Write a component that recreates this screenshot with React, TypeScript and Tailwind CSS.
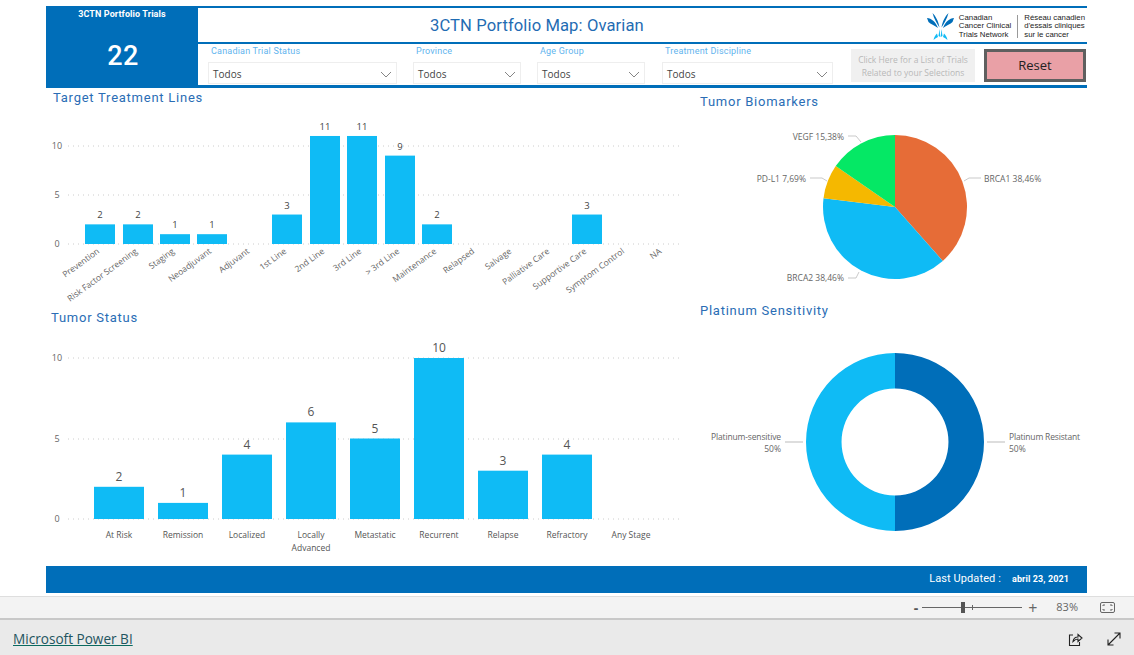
const din = "font-['Roboto',sans-serif]";
const seg = "'Open Sans', 'Noto Sans', sans-serif";

const filters = [
  { label: "Canadian Trial Status", width: "w-[189px]" },
  { label: "Province", width: "w-[108px]" },
  { label: "Age Group", width: "w-[108px]" },
  { label: "Treatment Discipline", width: "w-[171px]" },
];

const lines = [
  { name: "Prevention", x: 85, v: 2 },
  { name: "Risk Factor Screening", x: 123, v: 2 },
  { name: "Staging", x: 160, v: 1 },
  { name: "Neoadjuvant", x: 197, v: 1 },
  { name: "Adjuvant", x: 235, v: 0 },
  { name: "1st Line", x: 272, v: 3 },
  { name: "2nd Line", x: 310, v: 11 },
  { name: "3rd Line", x: 347, v: 11 },
  { name: "> 3rd Line", x: 385, v: 9 },
  { name: "Maintenance", x: 422, v: 2 },
  { name: "Relapsed", x: 460, v: 0 },
  { name: "Salvage", x: 497, v: 0 },
  { name: "Palliative Care", x: 535, v: 0 },
  { name: "Supportive Care", x: 572, v: 3 },
  { name: "Symptom Control", x: 610, v: 0 },
  { name: "NA", x: 647, v: 0 },
];

const status = [
  { name: ["At Risk"], x: 94, v: 2 },
  { name: ["Remission"], x: 158, v: 1 },
  { name: ["Localized"], x: 222, v: 4 },
  { name: ["Locally", "Advanced"], x: 286, v: 6 },
  { name: ["Metastatic"], x: 350, v: 5 },
  { name: ["Recurrent"], x: 414, v: 10 },
  { name: ["Relapse"], x: 478, v: 3 },
  { name: ["Refractory"], x: 542, v: 4 },
  { name: ["Any Stage"], x: 606, v: 0 },
];

function Chevron() {
  return (
    <svg width="12" height="7" viewBox="0 0 12 7" className="shrink-0">
      <path d="M1 1l5 5 5-5" fill="none" stroke="#777" strokeWidth="0.9" />
    </svg>
  );
}

function Filter({ label, width }: { label: string; width: string }) {
  return (
    <div className={`flex shrink-0 flex-col ${width}`}>
      <div className={`pl-[3px] pt-[1px] text-[9px] leading-[12px] tracking-[0.2px] text-[#5fb4ee] ${din}`}>{label}</div>
      <div className="mt-[5px] flex h-[22px] items-center justify-between border border-[#eeeeee] pl-[4px] pr-[4px] pt-[2px]">
        <span className="text-[10px] text-[#444]" style={{ fontFamily: seg }}>Todos</span>
        <Chevron />
      </div>
    </div>
  );
}

function Logo() {
  return (
    <div className="mt-[3px] flex items-center text-[7.8px] leading-[8.2px] text-[#222]" style={{ fontFamily: "'Liberation Sans', sans-serif" }}>
      <svg width="30" height="28" viewBox="0 0 30 28" className="mr-[3px]">
        <g fill="#006eb9">
          <path d="M1 5c4.500.5 8.500 3.500 11 10-3.500-2.500-7.500-4-9.500-6z" />
          <path d="M6.500 0c3 3 6 8 7 14.500C11 10.500 8 6 6.500 0z" />
          <path d="M28 5c-4.500.5-8.500 3.500-11 10 3.500-2.500 7.500-4 9.500-6z" />
          <path d="M22.500 0c-3 3-6 8-7 14.500C18 10.500 21 6 22.500 0z" />
        </g>
        <g fill="#12bbf5">
          <path d="M13.500 16l.8 8-1.800-1z" />
          <path d="M15.500 16l-.8 8 1.800-1z" />
          <path d="M11 20.500c-1.500 1.500-3 3.500-3.500 6.500 1.500-1.500 3-2.500 4.500-3z" />
          <path d="M18 20.500c1.500 1.500 3 3.500 3.500 6.500-1.500-1.500-3-2.500-4.500-3z" />
        </g>
      </svg>
      <div>
        <div>Canadian</div>
        <div>Cancer Clinical</div>
        <div>Trials Network</div>
      </div>
      <div className="mx-[6px] h-[23px] w-px bg-[#999]" />
      <div>
        <div>Réseau canadien</div>
        <div>d'essais cliniques</div>
        <div>sur le cancer</div>
      </div>
    </div>
  );
}

function Grid({ ys, labels }: { ys: number[]; labels: string[] }) {
  return (
    <>
      {ys.map((y, i) => (
        <g key={y}>
          <line x1="68" x2="680" y1={y} y2={y} stroke="#ccc" strokeWidth="1" strokeDasharray="1 4" />
          <text x="57" y={y + 3} textAnchor="middle" fontSize="9" fill="#666">{labels[i]}</text>
        </g>
      ))}
    </>
  );
}

function LinesChart() {
  const base = 244;
  const unit = 9.82;
  return (
    <svg width="644" height="200" viewBox="46 108 644 200" style={{ fontFamily: seg }} className="block">
      <Grid ys={[146, 195, 244]} labels={["10", "5", "0"]} />
      {lines.map((l) => (
        <g key={l.name}>
          {l.v > 0 && (
            <>
              <rect x={l.x} y={base - l.v * unit} width="30" height={l.v * unit} fill="#0fbbf5" />
              <text x={l.x + 15} y={base - l.v * unit - 6} textAnchor="middle" fontSize="9.500" fill="#444">{l.v}</text>
            </>
          )}
          <text
            transform={`translate(${l.x + 15} 252.500) rotate(-36)`}
            textAnchor="end"
            fontSize="8.500"
            fill="#666"
          >
            {l.name}
          </text>
        </g>
      ))}
    </svg>
  );
}

function StatusChart() {
  const base = 519;
  const unit = 16.1;
  return (
    <svg width="644" height="238" viewBox="46 328 644 238" style={{ fontFamily: seg }} className="block">
      <Grid ys={[358, 439, 519]} labels={["10", "5", "0"]} />
      {status.map((s) => (
        <g key={s.x}>
          {s.v > 0 && (
            <>
              <rect x={s.x} y={base - s.v * unit} width="50" height={s.v * unit} fill="#0fbbf5" />
              <text x={s.x + 25} y={base - s.v * unit - 6} textAnchor="middle" fontSize="12" fill="#555">{s.v}</text>
            </>
          )}
          {s.name.map((n, i) => (
            <text key={n} x={s.x + 25} y={538 + i * 13} textAnchor="middle" fontSize="8.500" fill="#555">{n}</text>
          ))}
        </g>
      ))}
    </svg>
  );
}

function polar(cx: number, cy: number, r: number, pct: number) {
  const a = (pct / 100) * Math.PI * 2;
  return [cx + r * Math.sin(a), cy - r * Math.cos(a)];
}

function slice(cx: number, cy: number, r: number, from: number, to: number) {
  const [x1, y1] = polar(cx, cy, r, from);
  const [x2, y2] = polar(cx, cy, r, to);
  const large = to - from > 50 ? 1 : 0;
  return `M${cx} ${cy}L${x1} ${y1}A${r} ${r} 0 ${large} 1 ${x2} ${y2}Z`;
}

function BiomarkerPie() {
  const cx = 895;
  const cy = 207;
  const r = 72;
  const leader = "#bbb";
  return (
    <svg width="397" height="188" viewBox="690 112 397 188" style={{ fontFamily: seg }} className="block">
      <path d={slice(cx, cy, r, 0, 38.46)} fill="#e66c37" />
      <path d={slice(cx, cy, r, 38.46, 76.92)} fill="#0fbbf5" />
      <path d={slice(cx, cy, r, 76.92, 84.61)} fill="#f5b800" />
      <path d={slice(cx, cy, r, 84.61, 100)} fill="#05e865" />
      <g fill="none" stroke={leader} strokeWidth="0.8">
        <path d="M964 181l5-3h12" />
        <path d="M848 136h8l5 6" />
        <path d="M810 178h12l5 3" />
        <path d="M848 278h8l3-6" />
      </g>
      <g fontSize="8.500" fill="#666">
        <text x="984" y="182">BRCA1 38,46%</text>
        <text x="844" y="140" textAnchor="end">VEGF 15,38%</text>
        <text x="806" y="182" textAnchor="end">PD-L1 7,69%</text>
        <text x="844" y="281" textAnchor="end">BRCA2 38,46%</text>
      </g>
    </svg>
  );
}

function PlatinumDonut() {
  return (
    <svg width="397" height="244" viewBox="690 322 397 244" style={{ fontFamily: seg }} className="block">
      <path d="M895 353A89 89 0 0 1 895 531V495.500A53.500 53.500 0 0 0 895 388.500Z" fill="#006eb9" />
      <path d="M895 353A89 89 0 0 0 895 531V495.500A53.500 53.500 0 0 1 895 388.500Z" fill="#0fbbf5" />
      <path d="M785 442h18M987 442h18" stroke="#ddd" strokeWidth="2" />
      <g fontSize="8.500" fill="#666">
        <text x="781" y="440" textAnchor="end" textLength="70">Platinum-sensitive</text>
        <text x="781" y="452" textAnchor="end">50%</text>
        <text x="1009" y="440" textLength="71">Platinum Resistant</text>
        <text x="1009" y="452">50%</text>
      </g>
    </svg>
  );
}

function Title({ children, className }: { children: string; className: string }) {
  return (
    <div className={`text-[13px] font-normal leading-[18px] tracking-[0.75px] text-[#2a6db5] ${din} ${className}`}>{children}</div>
  );
}

export default function App() {
  return (
    <div className="flex h-[655px] w-[1134px] flex-col overflow-hidden bg-white">
      <div className="ml-[46px] h-[596px] w-[1041px] pt-[6px]">
        <header className="flex h-[82px]">
          <div className={`flex w-[152px] shrink-0 flex-col items-center bg-[#006eb9] text-white ${din}`}>
            <div className="mt-[2px] text-[9px] font-bold leading-[12px] tracking-[0.1px]">3CTN Portfolio Trials</div>
            <div className="ml-[2px] mt-[20px] text-[27px] font-medium leading-[32px] tracking-[0.5px]">22</div>
          </div>
          <div className="flex flex-1 flex-col border-t-[2px] border-b-[3px] border-[#006eb9]">
            <div className="flex h-[36px] items-center justify-between border-b-[2px] border-[#006eb9] pl-[232px] pr-[2px]">
              <div className={`mt-[1px] text-[16.6px] leading-[22px] tracking-[0.1px] text-[#1f6cb3] ${din}`}>3CTN Portfolio Map: Ovarian</div>
              <Logo />
            </div>
            <div className="flex flex-1 pl-[10px]">
              {filters.map((f, i) => (
                <div key={f.label} className={i === 0 ? "" : i === 3 ? "ml-[17px]" : "ml-[16px]"}>
                  <Filter label={f.label} width={f.width} />
                </div>
              ))}
              <div className="ml-[18px] mt-[5px] flex h-[33px] w-[124px] flex-col items-center justify-center bg-[#f0f0f0] text-[8.500px] leading-[13px] text-[#b8b8b8]" style={{ fontFamily: seg }}>
                <div>Click Here for a List of Trials</div>
                <div>Related to your Selections</div>
              </div>
              <button className="ml-[9px] mt-[5px] h-[33px] w-[102px] border-[3px] border-[#5f5f5f] bg-[#e9a0a6] pt-[1px] text-[13px] text-[#222]" style={{ fontFamily: seg }}>
                Reset
              </button>
            </div>
          </div>
        </header>

        <div className="flex h-[478px]">
          <section className="w-[644px] shrink-0">
            <Title className="h-[20px] pl-[7px] pt-[1px]">Target Treatment Lines</Title>
            <LinesChart />
            <Title className="h-[20px] pl-[5px] pt-[1px]">Tumor Status</Title>
            <StatusChart />
          </section>
          <section className="flex-1">
            <Title className="h-[24px] pl-[10px] pt-[5px]">Tumor Biomarkers</Title>
            <BiomarkerPie />
            <Title className="h-[22px] pl-[10px] pt-[2px]">Platinum Sensitivity</Title>
            <PlatinumDonut />
          </section>
        </div>

        <footer className="flex h-[27px] items-center justify-end bg-[#006eb9] pr-[18px] text-white">
          <span className={`text-[11px] tracking-[0.1px] ${din}`}>Last Updated :</span>
          <span className={`ml-[11px] text-[9px] font-bold tracking-[0.1px] ${din}`}>abril 23, 2021</span>
        </footer>
      </div>

      <div className="flex h-[22px] items-center justify-end border-t border-[#dedede] bg-[#f3f3f3] text-[#666]" style={{ fontFamily: seg }}>
        <span className="text-[14px] font-bold leading-none text-[#555]">-</span>
        <div className="relative ml-[4px] h-px w-[100px] bg-[#666]">
          <div className="absolute left-[39px] top-[-5px] h-[11px] w-[4px] bg-[#555]" />
          <div className="absolute left-[50px] top-[-2px] h-[5px] w-px bg-[#666]" />
        </div>
        <span className="ml-[6px] text-[16px] leading-none">+</span>
        <span className="ml-[19px] text-[11px]">83%</span>
        <svg width="15" height="11" viewBox="0 0 15 11" className="ml-[22px] mr-[19px]">
          <rect x="0.500" y="0.500" width="14" height="10" rx="1.500" fill="none" stroke="#666" />
          <path d="M3 4V3h2M10 3h2v1M3 7v1h2M10 8h2V7" fill="none" stroke="#666" />
        </svg>
      </div>

      <div className="flex flex-1 items-center justify-between border-t-[2px] border-[#c8c8c8] bg-[#eaeaea] pl-[13px] pr-[13px] pt-[3px]">
        <a className="text-[13.6px] text-[#1f5560] underline decoration-[#0b6a5f]" style={{ fontFamily: seg }}>Microsoft Power BI</a>
        <div className="flex items-center gap-[24px]">
          <svg width="15" height="15" viewBox="0 0 15 15">
            <path d="M5 3H1.500v10.500h10V10" fill="none" stroke="#222" strokeWidth="1.100" />
            <path d="M5 9.500c.5-3 2.500-4.500 5-4.500V2.500L14 6l-4 3.500V7c-2 0-3.500 1-5 2.500z" fill="none" stroke="#222" strokeWidth="1.100" />
          </svg>
          <svg width="14" height="14" viewBox="0 0 14 14">
            <path d="M1 13L13 1M7.500 1H13v5.500M1 7.500V13h5.500" fill="none" stroke="#222" strokeWidth="1.100" />
          </svg>
        </div>
      </div>
    </div>
  );
}
